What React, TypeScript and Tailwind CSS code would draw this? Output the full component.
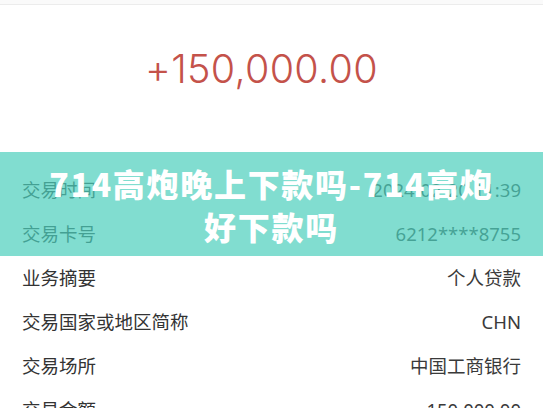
const rows = [
  { label: "交易时间", value: "2024-02-20 11:39" },
  { label: "交易卡号", value: "6212****8755" },
  { label: "业务摘要", value: "个人贷款" },
  { label: "交易国家或地区简称", value: "CHN" },
  { label: "交易场所", value: "中国工商银行" },
  { label: "交易金额", value: "150,000.00" },
]

export default function App() {
  return (
    <div className="relative h-[408px] w-full overflow-hidden bg-white font-['Noto_Sans','Noto_Sans_CJK_SC',sans-serif] text-[#333]">
      <div className="h-[4px] bg-[#fafafa]" />
      <div className="border-t border-[#ececec]" />
      <div className="flex h-[163px] justify-center pt-[39px]">
        <div className="text-[39.5px] font-light leading-[50px] text-[#c4524a] font-['Inter','Noto_Sans',sans-serif] tracking-[0.3px] -translate-x-[10px]">
          +150,000.00
        </div>
      </div>
      <div>
        {rows.map((r) => (
          <div key={r.label} className="flex h-[44px] items-center justify-between px-[22px] text-[18.5px]">
            <span>{r.label}</span>
            <span className="text-[#3a3a3a]">{r.value}</span>
          </div>
        ))}
      </div>

      <div className="absolute inset-x-0 top-[152px] flex h-[104px] flex-col items-center justify-center bg-[rgba(76,206,188,0.7)] pt-[2px]">
        <div className="text-center text-[32px] font-black leading-[43px] tracking-[1.7px] text-white font-['Noto_Sans_CJK_SC',sans-serif]">
          714高炮晚上下款吗-714高炮
          <br />
          好下款吗
        </div>
      </div>
    </div>
  )
}
